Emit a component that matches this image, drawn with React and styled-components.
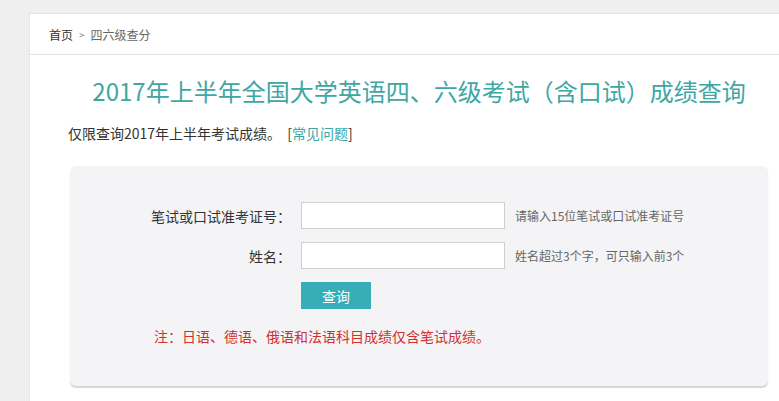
import React from 'react';
import styled, {createGlobalStyle} from 'styled-components';

const GlobalStyle = createGlobalStyle`
  html, body {
    margin: 0;
    padding: 0;
    background: #efefef;
    overflow: hidden;
    font-family: "Noto Sans CJK SC", "Microsoft YaHei", "Liberation Sans", sans-serif;
  }
`

const Page = styled.div`
  padding: 13px 0 0 29px;
  height: 401px;
  box-sizing: border-box;
`

const Card = styled.div`
  width: 779px;
  height: 400px;
  background: #fff;
  border-top: 1px solid #e2e2e2;
  border-left: 1px solid #e6e6e6;
  box-sizing: border-box;
  overflow: hidden;
`

const Crumbs = styled.div`
  height: 40px;
  display: flex;
  align-items: center;
  padding-left: 19px;
  font-size: 12px;
  color: #333;
  border-bottom: 1px solid #e3e3e3;

  .sep {
    margin: 0 6px;
    font-size: 10px;
    color: #888;
  }

  .current {
    color: #666;
  }
`

const Title = styled.h1`
  margin: 20px 0 0;
  font-size: 24px;
  font-weight: 400;
  line-height: 32px;
  color: #3ea7a4;
  text-align: center;
`

const Intro = styled.p`
  margin: 16px 0 0 38px;
  font-size: 14px;
  line-height: 20px;
  color: #333;

  a {
    color: #3ea7a4;
    text-decoration: none;
  }
`

const QueryBox = styled.div`
  margin: 23px 40px 0;
  height: 220px;
  background: #f4f4f6;
  border-radius: 6px;
  box-shadow: 0 2px 1px #d6d6d6;
  padding-top: 36px;
  box-sizing: border-box;
`

const FormGrid = styled.div`
  display: grid;
  grid-template-columns: 221px 204px auto;
  column-gap: 10px;
  row-gap: 13px;
  align-items: center;
`

const Label = styled.label`
  text-align: right;
  font-size: 14px;
  color: #333;
`

const Input = styled.input`
  height: 27px;
  width: 204px;
  box-sizing: border-box;
  border: 1px solid #cfcfcf;
  background: #fff;
  outline: none;
`

const Hint = styled.span`
  font-size: 12px;
  color: #666;
`

const Button = styled.button`
  grid-column: 2;
  width: 70px;
  height: 27px;
  border: none;
  background: #37adb7;
  color: #fff;
  font-size: 14px;
  font-family: inherit;
  cursor: pointer;
`

const Note = styled.p`
  margin: 17px 0 0 84px;
  font-size: 14px;
  line-height: 20px;
  color: #d0302e;
`

export default function App() {
    return (
        <Page>
            <GlobalStyle/>
            <Card>
                <Crumbs>
                    <span>首页</span>
                    <span className="sep">&gt;</span>
                    <span className="current">四六级查分</span>
                </Crumbs>
                <Title>2017年上半年全国大学英语四、六级考试（含口试）成绩查询</Title>
                <Intro>仅限查询2017年上半年考试成绩。&nbsp;&nbsp;[<a href="#">常见问题</a>]</Intro>
                <QueryBox>
                    <FormGrid>
                        <Label>笔试或口试准考证号：</Label>
                        <Input type="text"/>
                        <Hint>请输入15位笔试或口试准考证号</Hint>
                        <Label>姓名：</Label>
                        <Input type="text"/>
                        <Hint>姓名超过3个字，可只输入前3个</Hint>
                        <Button>查询</Button>
                    </FormGrid>
                    <Note>注：日语、德语、俄语和法语科目成绩仅含笔试成绩。</Note>
                </QueryBox>
            </Card>
        </Page>
    );
}
